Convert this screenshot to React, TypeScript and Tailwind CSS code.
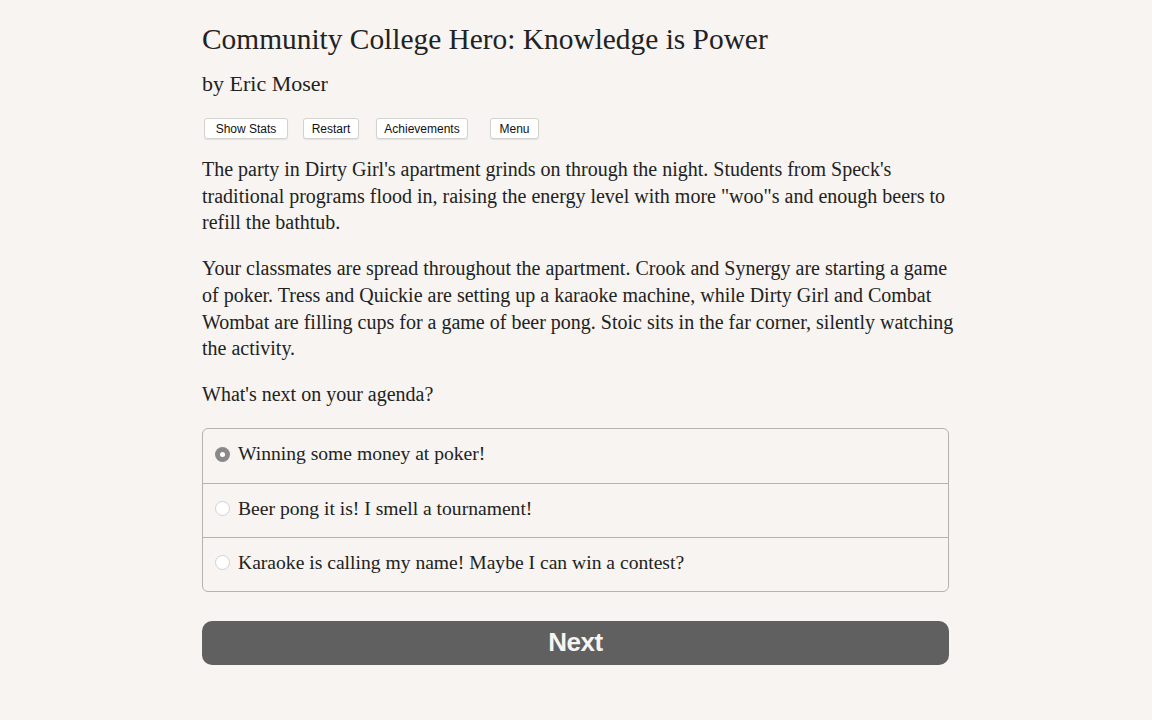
import React, { useState } from 'react';

const CHOICES = [
  'Winning some money at poker!',
  'Beer pong it is! I smell a tournament!',
  'Karaoke is calling my name! Maybe I can win a contest?',
];

const serif = { fontFamily: '"Liberation Serif", "DejaVu Serif", serif' };

const TopButton: React.FC<{ label: string; className: string }> = ({ label, className }) => (
  <button
    className={`h-[21px] bg-white border border-[#d4d2cf] rounded-[3px] text-[12px] text-[#111] font-['Liberation_Sans',Arial,sans-serif] leading-none shadow-[0_1px_1px_rgba(0,0,0,0.08)] ${className}`}
  >
    {label}
  </button>
);

export default function App() {
  const [picked, setPicked] = useState(0);

  return (
    <div className="min-h-[720px] w-full bg-[#f7f4f1] text-[#222]" style={serif}>
      <div className="w-[747px] ml-[202px] pt-[21px]">
        <h1 className="text-[29.4px] leading-[36px]">Community College Hero: Knowledge is Power</h1>
        <h2 className="text-[22px] leading-[28px] mt-[13px]">by Eric Moser</h2>

        <div className="flex mt-[20px] ml-[2px]">
          <TopButton label="Show Stats" className="w-[84px]" />
          <TopButton label="Restart" className="w-[56px] ml-[15px]" />
          <TopButton label="Achievements" className="w-[92px] ml-[17px]" />
          <TopButton label="Menu" className="w-[49px] ml-[22px]" />
        </div>

        <div className="w-[760px] text-[20px] leading-[26.7px] mt-[17px]">
          <p>
            The party in Dirty Girl's apartment grinds on through the night. Students from Speck's traditional programs
            flood in, raising the energy level with more "woo"s and enough beers to refill the bathtub.
          </p>
          <p className="mt-[19px]">
            Your classmates are spread throughout the apartment. Crook and Synergy are starting a game of poker. Tress
            and Quickie are setting up a karaoke machine, while Dirty Girl and Combat Wombat are filling cups for a game
            of beer pong. Stoic sits in the far corner, silently watching the activity.
          </p>
          <p className="mt-[19px]">What's next on your agenda?</p>
        </div>

        {/* choice list */}
        <div className="mt-[20px] border border-[#b5b3b1] rounded-[6px] overflow-hidden">
          {CHOICES.map((c, i) => (
            <label
              key={c}
              onClick={() => setPicked(i)}
              className={`flex items-center h-[54px] pl-[12px] pb-[3px] cursor-pointer ${i > 0 ? 'border-t border-[#b5b3b1]' : ''}`}
            >
              <span
                className={`w-[15px] h-[15px] rounded-full flex items-center justify-center shrink-0 ${
                  picked === i ? 'bg-[#8a8988]' : 'bg-white border border-[#d3d1cf]'
                }`}
              >
                {picked === i && <span className="w-[5px] h-[5px] rounded-full bg-white" />}
              </span>
              <span className="ml-[8px] text-[19.6px] leading-none">{c}</span>
            </label>
          ))}
        </div>

        <button className="mt-[29px] w-full h-[44px] rounded-[10px] bg-[#616060] text-[#f7f4f1] text-[26px] font-bold font-['Liberation_Sans',Arial,sans-serif] tracking-[-0.5px]">
          Next
        </button>
      </div>
    </div>
  );
}
